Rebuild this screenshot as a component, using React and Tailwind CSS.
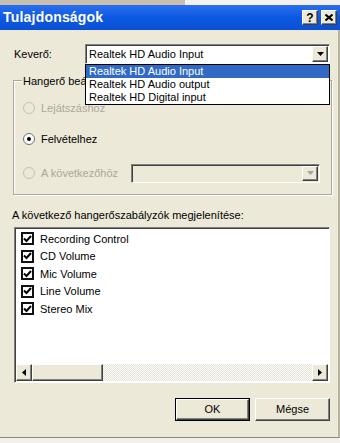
import React from 'react';

const raised =
  'border border-t-white border-l-white border-r-[#404040] border-b-[#404040] shadow-[inset_-1px_-1px_0_#808080]';
const sunken =
  'border border-t-[#808080] border-l-[#808080] border-r-white border-b-white shadow-[inset_1px_1px_0_#404040]';

const DownArrow = ({ disabled = false }) => (
  <svg width="7" height="4" viewBox="0 0 7 4">
    <path d="M0 0h7L3.5 4z" fill={disabled ? '#a6a39a' : '#000'} />
  </svg>
);

const Radio = ({ checked = false, disabled = false, label }) => (
  <div className="flex items-center h-[16px] pl-[9px]">
    <span
      className={`w-[12px] h-[12px] rounded-full flex items-center justify-center border ${
        disabled ? 'border-[#c4c1b4] bg-[#ece9d8]' : 'border-[#6f6f6f] bg-white'
      }`}
    >
      {checked && <span className="w-[4px] h-[4px] rounded-full bg-black" />}
    </span>
    <span className={`ml-[6px] ${disabled ? 'text-[#aca899]' : 'text-black'}`}>{label}</span>
  </div>
);

const Check = ({ label }) => (
  <div className="flex items-center h-[17.5px] pl-[6px]">
    <span className="w-[13px] h-[13px] border-2 border-[#111] bg-white flex items-center justify-center">
      <svg width="9" height="8" viewBox="0 0 9 8">
        <path d="M1 3.5l2.5 2.5L8 1" stroke="#000" strokeWidth="2" fill="none" />
      </svg>
    </span>
    <span className="ml-[6px]">{label}</span>
  </div>
);

const items = ['Recording Control', 'CD Volume', 'Mic Volume', 'Line Volume', 'Stereo Mix'];

export default function App() {
  return (
    <div className="w-[340px] h-[443px] overflow-hidden flex flex-col font-['Liberation_Sans',Arial,sans-serif] text-[11px] text-black">
      <div className="h-[5px] flex">
        <div className="w-[185px] bg-[#c9bfae]" />
        <div className="flex-1 bg-[#f4f2ee]" />
      </div>

      <div className="h-[25px] flex items-center pl-[3px] pr-[3px] bg-gradient-to-b from-[#2a6ff0] via-[#0d58e2] to-[#0a50d4]">
        <span className="text-white font-bold text-[14px] tracking-[0.2px]">Tulajdonságok</span>
        <div className="ml-auto flex gap-[3px]">
          <div className={`w-[16px] h-[15px] bg-[#ece9d8] flex items-center justify-center font-bold text-[12px] leading-none ${raised}`}>
            ?
          </div>
          <div className={`w-[16px] h-[15px] bg-[#ece9d8] flex items-center justify-center ${raised}`}>
            <svg width="8" height="7" viewBox="0 0 8 7">
              <path d="M0.5 0.5l7 6M7.5 0.5l-7 6" stroke="#000" strokeWidth="2" />
            </svg>
          </div>
        </div>
      </div>

      <div className="relative h-[408px] bg-[#ece9d8] border-r-2 border-b border-r-[#b8b4a2] border-b-[#8a8778] flex flex-col">
        <div className="mt-[14px] flex items-center h-[20px]">
          <span className="ml-[14px] w-[71px]">Keverő:</span>
          <div className={`w-[245px] h-[20px] bg-white flex items-center ${sunken}`}>
            <span className="pl-[3px] flex-1">Realtek HD Audio Input</span>
            <div className={`w-[16px] h-[16px] mr-[1px] bg-[#ece9d8] flex items-center justify-center ${raised}`}>
              <DownArrow />
            </div>
          </div>
        </div>

        <div className="relative mt-[16px] ml-[13px] w-[319px] h-[115px] border border-[#aca899] shadow-[inset_1px_1px_0_#fff,1px_1px_0_#fff] pt-[19px]">
          <span className="absolute -top-[8px] left-[8px] w-[63px] overflow-hidden whitespace-nowrap pl-[1px] bg-[#ece9d8]">
            Hangerő beállítása
          </span>
          <Radio disabled label="Lejátszáshoz" />
          <div className="mt-[15px]">
            <Radio checked label="Felvételhez" />
          </div>
          <div className="mt-[16px] h-[20px] flex items-center justify-between pr-[11px]">
            <Radio disabled label="A következőhöz" />
            <div className={`w-[189px] h-[19px] bg-[#ece9d8] flex items-center justify-end ${sunken}`}>
              <div className={`w-[16px] h-[15px] mr-[1px] bg-[#ece9d8] flex items-center justify-center ${raised}`}>
                <DownArrow disabled />
              </div>
            </div>
          </div>
        </div>

        <div className="mt-[14px] ml-[12px] h-[13px] leading-[13px]">A következő hangerőszabályzók megjelenítése:</div>

        <div className={`mt-[5px] ml-[14px] w-[316px] h-[156px] bg-white flex flex-col ${sunken}`}>
          <div className="flex-1 pt-[2px]">
            {items.map((it) => (
              <Check key={it} label={it} />
            ))}
          </div>
          <div className="h-[17px] flex ml-[1px] mr-[1px] mb-[1px]">
            <div className={`w-[16px] h-[17px] bg-[#ece9d8] flex items-center justify-center ${raised}`}>
              <svg width="4" height="7" viewBox="0 0 4 7">
                <path d="M4 0v7L0 3.5z" fill="#000" />
              </svg>
            </div>
            <div className={`w-[71px] h-[17px] bg-[#ece9d8] ${raised}`} />
            <div className="flex-1 bg-[conic-gradient(#ffffff_25%,#e4e1d2_0_50%,#ffffff_0_75%,#e4e1d2_0)] bg-[length:2px_2px]" />
            <div className={`w-[16px] h-[17px] bg-[#ece9d8] flex items-center justify-center ${raised}`}>
              <svg width="4" height="7" viewBox="0 0 4 7">
                <path d="M0 0v7L4 3.5z" fill="#000" />
              </svg>
            </div>
          </div>
        </div>

        <div className="mt-[15px] flex justify-end gap-[5px] pr-[8px]">
          <div className="w-[75px] h-[23px] border border-black">
            <div className={`w-full h-full bg-[#ece9d8] flex items-center justify-center ${raised}`}>OK</div>
          </div>
          <div className={`w-[75px] h-[23px] bg-[#ece9d8] flex items-center justify-center ${raised}`}>Mégse</div>
        </div>

        <div className="absolute left-[85px] top-[34px] w-[245px] h-[41px] border border-black bg-white flex flex-col">
          <div className="h-[13px] leading-[13px] pl-[3px] bg-[#316ac5] text-white">Realtek HD Audio Input</div>
          <div className="h-[13px] leading-[13px] pl-[3px]">Realtek HD Audio output</div>
          <div className="h-[13px] leading-[13px] pl-[3px]">Realtek HD Digital input</div>
        </div>
      </div>

      <div className="flex-1 bg-[#f2f0e8]" />
    </div>
  );
}
